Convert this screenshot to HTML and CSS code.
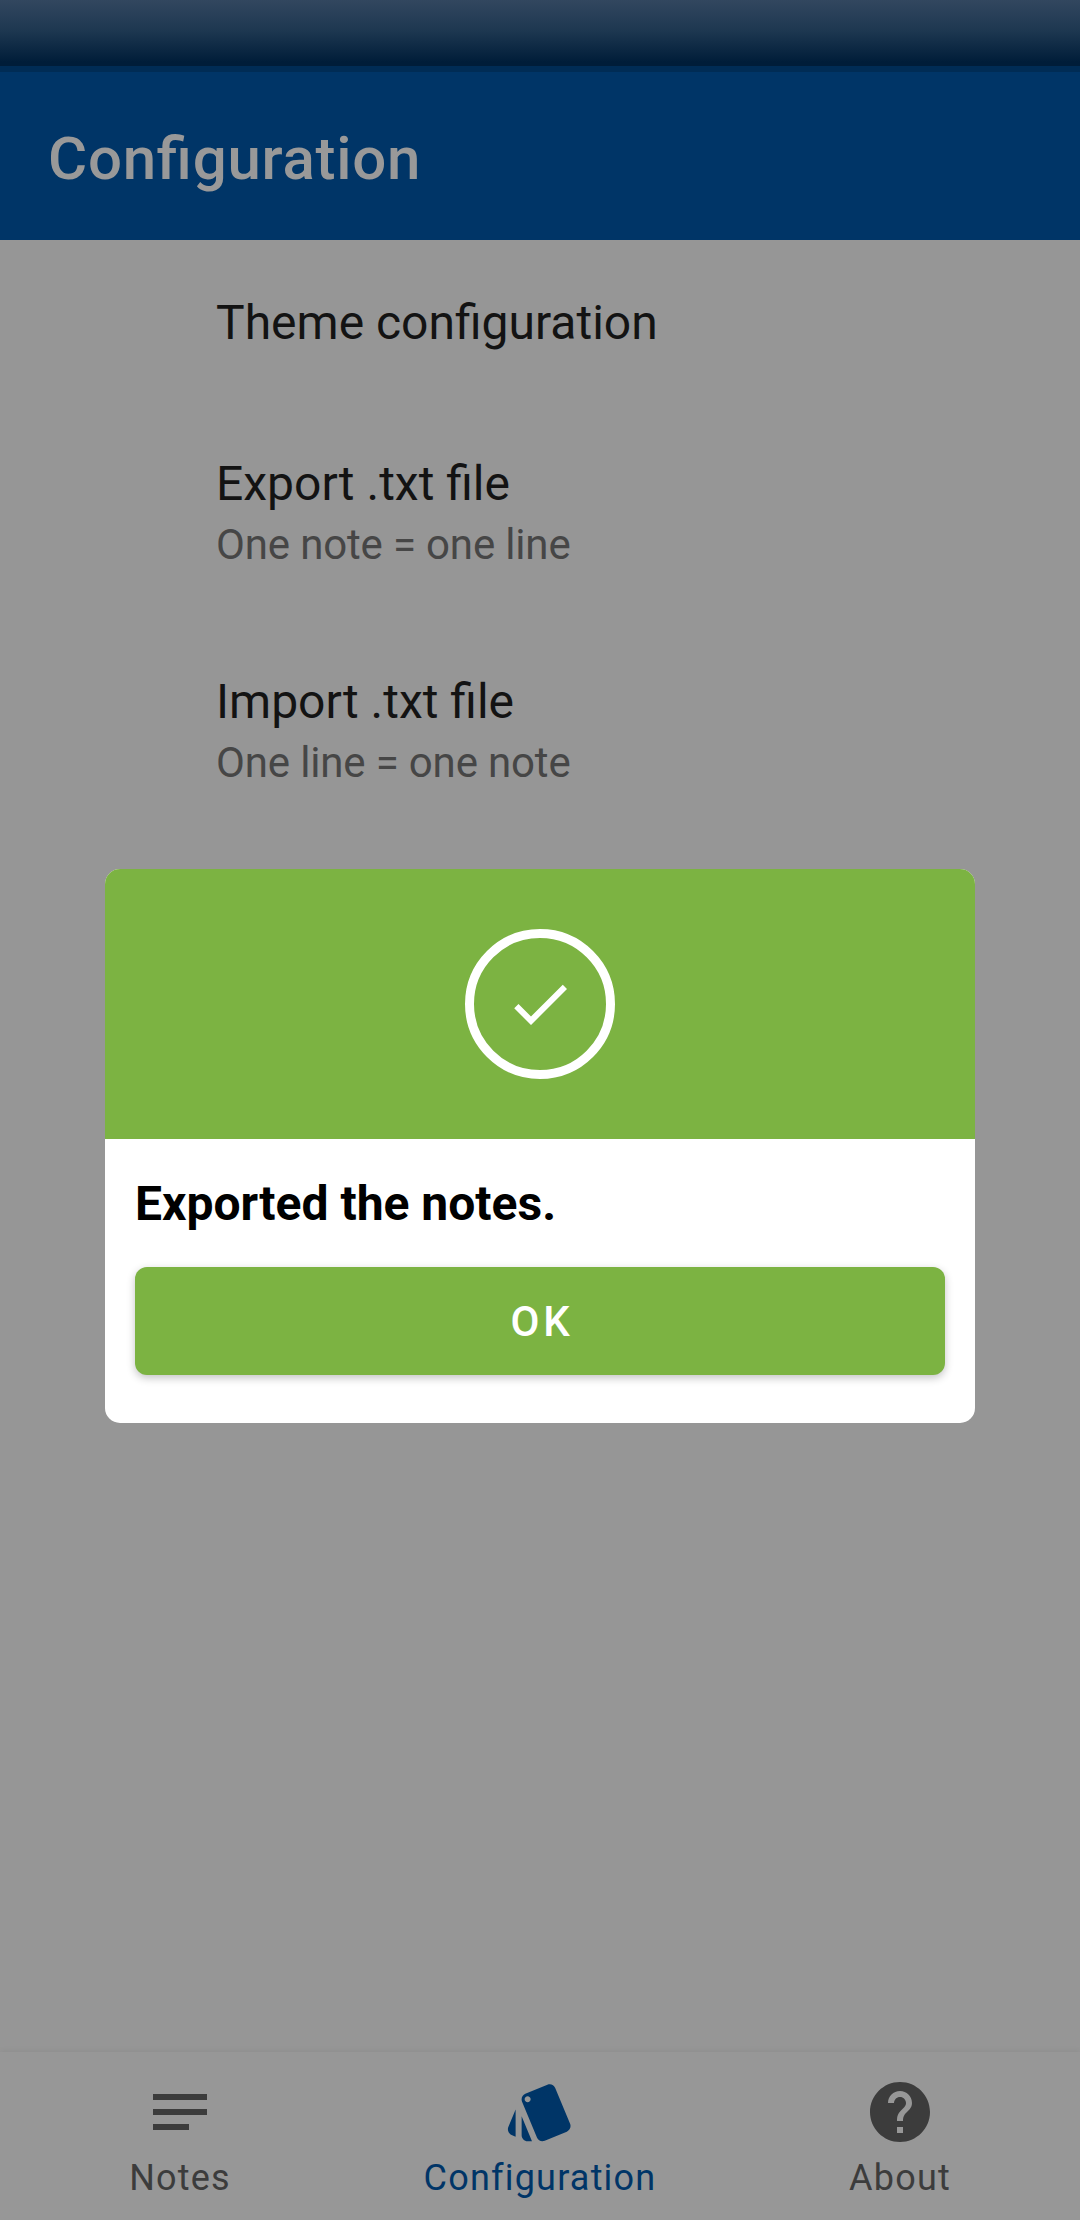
FILE: index.html
```html
<!DOCTYPE html>
<html lang="en">
<head>
<meta charset="utf-8">
<title>Configuration</title>
<link rel="stylesheet" href="styles.css">
</head>
<body>
<div class="app">
  <div class="status-bar"></div>
  <header class="toolbar"><h1 class="toolbar-title">Configuration</h1></header>
  <main class="preferences">
    <section class="preference">
      <h2 class="preference-title">Theme configuration</h2>
    </section>
    <section class="preference">
      <h2 class="preference-title">Export .txt file</h2>
      <p class="preference-summary">One note = one line</p>
    </section>
    <section class="preference">
      <h2 class="preference-title">Import .txt file</h2>
      <p class="preference-summary">One line = one note</p>
    </section>
  </main>
  <nav class="bottom-nav">
    <a class="nav-item">
      <svg class="icon" viewBox="0 0 24 24"><path d="M3 18h12v-2H3v2zM3 6v2h18V6H3zm0 7h18v-2H3v2z"/></svg>
      <span>Notes</span>
    </a>
    <a class="nav-item nav-item-active">
      <svg class="icon" viewBox="0 0 24 24"><path d="M2.53 19.65l1.34.56v-9.03l-2.43 5.86c-.41 1.02.08 2.19 1.09 2.61zm19.5-3.7L17.07 3.98c-.31-.75-1.04-1.21-1.81-1.23-.26 0-.53.04-.79.15L7.1 5.95c-.75.31-1.21 1.03-1.23 1.8-.01.27.04.54.15.8l4.96 11.97c.31.76 1.05 1.22 1.83 1.23.26 0 .52-.05.77-.15l7.36-3.05c1.02-.42 1.51-1.59 1.09-2.6zM7.88 8.75c-.55 0-1-.45-1-1s.45-1 1-1 1 .45 1 1-.45 1-1 1zm-2 11c0 1.1.9 2 2 2h1.45l-3.45-8.34v6.34z"/></svg>
      <span>Configuration</span>
    </a>
    <a class="nav-item">
      <svg class="icon" viewBox="0 0 24 24"><path d="M12 2C6.48 2 2 6.48 2 12s4.48 10 10 10 10-4.480 10-10S17.520 2 12 2zm1 17h-2v-2h2v2zm2.070-7.750l-.9.920C13.450 12.900 13 13.500 13 15h-2v-.5c0-1.100.450-2.100 1.170-2.830l1.240-1.260c.370-.360.590-.860.590-1.410 0-1.100-.9-2-2-2s-2 .9-2 2H8c0-2.210 1.790-4 4-4s4 1.790 4 4c0 .880-.360 1.680-.930 2.250z"/></svg>
      <span>About</span>
    </a>
  </nav>
</div>
<div class="overlay">
  <div class="dialog" role="dialog">
    <div class="dialog-header">
      <div class="check-ring">
        <svg class="icon" viewBox="0 0 24 24"><path d="M9 16.170L4.830 12l-1.420 1.410L9 19 21 7l-1.410-1.410z"/></svg>
      </div>
    </div>
    <div class="dialog-body">
      <p class="dialog-message">Exported the notes.</p>
      <button class="dialog-button">OK</button>
    </div>
  </div>
</div>
</body>
</html>
```
FILE: styles.css
```css
* { box-sizing: border-box; margin: 0; padding: 0; }

body {
  width: 1080px;
  height: 2220px;
  overflow: hidden;
  background: #969696;
  font-family: Roboto, sans-serif;
}

.app { display: flex; flex-direction: column; height: 2220px; }

.status-bar {
  height: 72px;
  border-bottom: 6px solid #002c55;
  background: linear-gradient(#32475f 0, #1e3851 30px, #001d39 62px);
}

.toolbar {
  display: flex;
  align-items: center;
  height: 168px;
  padding: 5px 48px 0;
  background: #003567;
}

.toolbar-title {
  color: #999;
  font-size: 60px;
  font-weight: 500;
  line-height: 70px;
  letter-spacing: 0.75px;
  font-feature-settings: "liga" 1;
}

.preferences { flex: 1; padding: 3px 0 0 216px; }

.preference { padding: 48px 0 49px; }

.preference-title { color: #131313; font-size: 48px; font-weight: 400; line-height: 64px; }

.preference-summary {
  color: #464646;
  font-size: 42px;
  line-height: 57px;
  letter-spacing: -0.16px;
}

.bottom-nav {
  display: grid;
  grid-template-columns: repeat(3, 1fr);
  height: 168px;
  background: #979797;
  box-shadow: 0 -1px 6px rgba(0, 0, 0, 0.06);
}

.nav-item {
  display: flex;
  flex-direction: column;
  align-items: center;
  gap: 9px;
  padding-top: 24px;
  color: #3c3c3c;
  font-size: 36px;
  line-height: 42px;
  letter-spacing: 1.2px;
}

.nav-item-active { color: #003567; }

.icon { width: 72px; height: 72px; fill: currentColor; }

.overlay {
  position: absolute;
  inset: 0;
  display: flex;
  justify-content: center;
  align-items: flex-start;
  padding-top: 869px;
}

.dialog {
  width: 870px;
  height: 554px;
  overflow: hidden;
  border-radius: 15px;
  background: #fff;
}

.dialog-header {
  display: flex;
  justify-content: center;
  align-items: center;
  height: 270px;
  background: #7cb342;
}

.check-ring {
  display: flex;
  justify-content: center;
  align-items: center;
  width: 150px;
  height: 150px;
  border: 9px solid #fff;
  border-radius: 50%;
  color: #fff;
}

.dialog-body { display: flex; flex-direction: column; gap: 34px; padding: 36px 30px; }

.dialog-message { color: #000; font-size: 48px; font-weight: 700; line-height: 58px; }

.dialog-button {
  height: 108px;
  padding: 2px 0 0 4px;
  border: 0;
  border-radius: 12px;
  background: #7cb342;
  box-shadow: 0 3px 9px rgba(0, 0, 0, 0.24);
  color: #fff;
  font: 500 42px/50px Roboto, sans-serif;
  letter-spacing: 3.75px;
}
```
